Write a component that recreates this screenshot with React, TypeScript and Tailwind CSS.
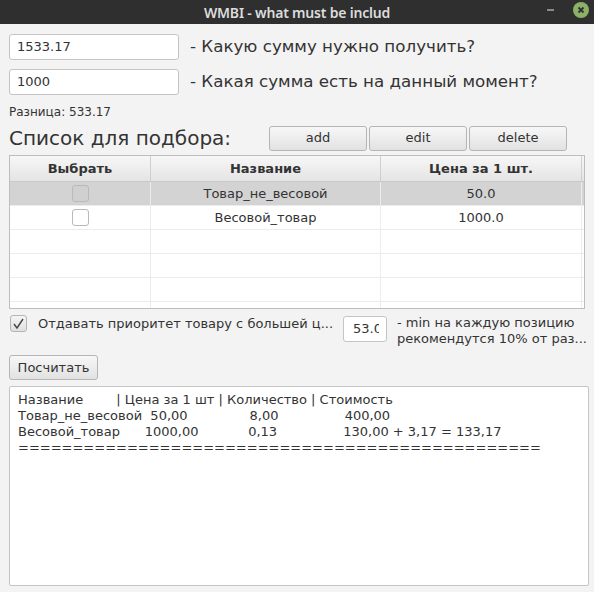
import React from "react";

const rows = [
  { name: "Товар_не_весовой", price: "50.0", selected: true },
  { name: "Весовой_товар", price: "1000.0", selected: false },
  null,
  null,
  null,
];

const report = [
  "Название        | Цена за 1 шт | Количество | Стоимость",
  "Товар_не_весовой  50,00               8,00                400,00",
  "Весовой_товар      1000,00            0,13                130,00 + 3,17 = 133,17",
  "================================================",
];

const App = () => {
  return (
    <div className="w-[594px] h-[592px] bg-[#f3f3f3] flex flex-col font-['DejaVu_Sans',sans-serif] text-[#333] overflow-hidden">
      {/* Title bar */}
      <div className="relative h-[24px] bg-[#2f2f2f] flex items-center justify-center shrink-0">
        <span className="font-['Noto_Sans',sans-serif] font-semibold text-[14px] text-[#dcdcdc] tracking-[-0.2px]">
          WMBI - what must be includ
        </span>
        <div className="absolute right-[5px] top-[2px] flex items-center gap-[19px]">
          <div className="w-[7px] h-[2px] bg-[#8a8a8a]" />
          <div className="w-[16px] h-[16px] rounded-full bg-[#8cb067] flex items-center justify-center">
            <svg width="8" height="8" viewBox="0 0 8 8">
              <path d="M1.5 1.5 L6.5 6.5 M6.5 1.5 L1.5 6.5" stroke="#2f2f2f" strokeWidth="1.8" />
            </svg>
          </div>
        </div>
      </div>

      <div className="flex flex-col px-[9px]">
        {/* Inputs */}
        <div className="flex items-center mt-[10px] h-[26px]">
          <div className="w-[170px] h-[26px] bg-white border border-[#c4c4c4] rounded-[3px] flex items-center px-[7px] text-[13px]">
            1533.17
          </div>
          <span className="ml-[11px] text-[16.7px] text-[#333]">- Какую сумму нужно получить?</span>
        </div>
        <div className="flex items-center mt-[9px] h-[26px]">
          <div className="w-[170px] h-[26px] bg-white border border-[#c4c4c4] rounded-[3px] flex items-center px-[7px] text-[13px]">
            1000
          </div>
          <span className="ml-[11px] text-[16.7px] text-[#333]">- Какая сумма есть на данный момент?</span>
        </div>
        <div className="mt-[9px] text-[12px] leading-[16px]">Разница: 533.17</div>

        {/* List header */}
        <div className="flex items-center mt-[4px] h-[28px]">
          <span className="text-[20px] leading-[24px] w-[260px]">Список для подбора:</span>
          <div className="flex gap-[2px]">
            {["add", "edit", "delete"].map((b) => (
              <button
                key={b}
                className="w-[98px] h-[25px] rounded-[3px] border border-[#b5b5b5] bg-gradient-to-b from-[#f7f7f7] to-[#e2e2e2] text-[13px] text-[#333]"
              >
                {b}
              </button>
            ))}
          </div>
        </div>

        {/* Table */}
        <div className="mt-[3px] w-[576px] h-[154px] border border-[#bdbdbd] bg-white flex flex-col overflow-hidden">
          <div className="flex h-[26px] shrink-0 bg-gradient-to-b from-[#f7f7f7] to-[#e4e4e4] border-b border-[#c8c8c8] text-[13px] font-bold">
            <div className="w-[141px] border-r border-[#cfcfcf] flex items-center justify-center">Выбрать</div>
            <div className="w-[230px] border-r border-[#cfcfcf] flex items-center justify-center">Название</div>
            <div className="w-[201px] border-r border-[#cfcfcf] flex items-center justify-center">Цена за 1 шт.</div>
            <div className="flex-1" />
          </div>
          {rows.map((r, i) => (
            <div
              key={i}
              className={`flex h-[24px] shrink-0 border-b border-[#ececec] text-[13px] ${
                r?.selected ? "bg-[#d3d3d3]" : "bg-white"
              }`}
            >
              <div className="w-[141px] border-r border-[#ececec] flex items-center justify-center">
                {r && (
                  <div
                    className={`w-[17px] h-[17px] rounded-[3px] border border-[#b9b9b9] ${
                      r.selected ? "bg-[#d0d0d0]" : "bg-white"
                    }`}
                  />
                )}
              </div>
              <div className="w-[230px] border-r border-[#ececec] flex items-center justify-center">
                {r?.name}
              </div>
              <div className="w-[201px] border-r border-[#ececec] flex items-center justify-center">
                {r?.price}
              </div>
              <div className="flex-1" />
            </div>
          ))}
          <div className="flex flex-1">
            <div className="w-[141px] border-r border-[#ececec]" />
            <div className="w-[230px] border-r border-[#ececec]" />
            <div className="w-[201px] border-r border-[#ececec]" />
          </div>
        </div>

        {/* Options row */}
        <div className="flex items-start mt-[6px] h-[36px]">
          <div className="w-[17px] h-[17px] ml-[1px] shrink-0 rounded-[3px] border border-[#b5b5b5] bg-gradient-to-b from-[#f5f5f5] to-[#e0e0e0] flex items-center justify-center">
            <svg width="13" height="12" viewBox="0 0 13 12">
              <path d="M2 6 L5 10 L11 1" fill="none" stroke="#444" strokeWidth="1.4" />
            </svg>
          </div>
          <span className="ml-[11px] text-[13px] leading-[17px] w-[305px] shrink-0 whitespace-nowrap">
            Отдавать приоритет товару с большей ц...
          </span>
          <div className="w-[44px] h-[26px] mt-[1px] shrink-0 bg-white border border-[#c4c4c4] rounded-[3px] flex items-center pl-[9px] text-[13px]">
            <span className="w-[26px] overflow-hidden whitespace-nowrap">53.0</span>
          </div>
          <div className="ml-[10px] text-[13px] leading-[16px] whitespace-nowrap">
            <div>- min на каждую позицию</div>
            <div>рекомендутся 10% от раз...</div>
          </div>
        </div>

        <button className="mt-[4px] w-[89px] h-[25px] rounded-[3px] border border-[#b5b5b5] bg-gradient-to-b from-[#f7f7f7] to-[#e2e2e2] text-[13px] text-[#333]">
          Посчитать
        </button>

        {/* Report */}
        <div className="mt-[6px] w-[580px] h-[200px] bg-white border border-[#c4c4c4] rounded-[2px] px-[8px] pt-[5px] text-[13px] leading-[16px] whitespace-pre">
          {report.map((l, i) => (
            <div key={i}>{l}</div>
          ))}
        </div>
      </div>
    </div>
  );
};

export default App;
